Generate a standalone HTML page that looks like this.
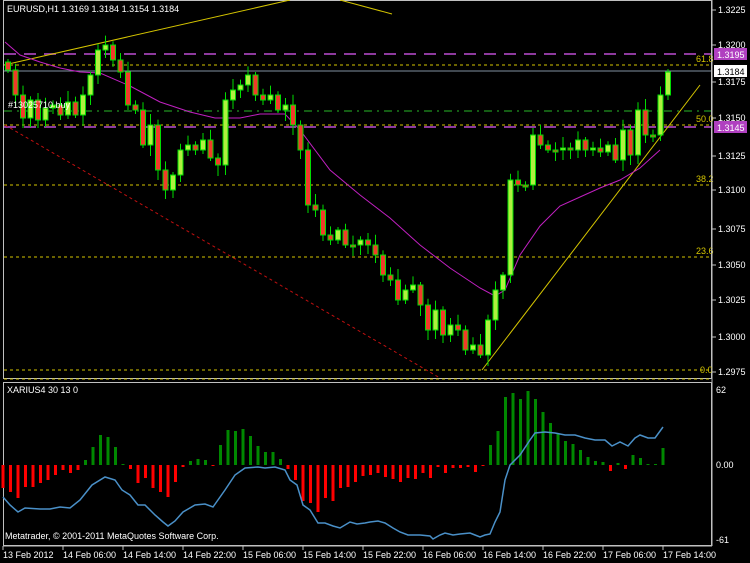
<!DOCTYPE html>
<html><head><meta charset="utf-8"><style>
html,body{margin:0;padding:0;background:#000;}
svg{display:block}
text{font-family:"Liberation Sans",sans-serif;font-size:9px;fill:#fff}
</style></head><body>
<svg id="s" width="750" height="563" viewBox="0 0 750 563" xmlns="http://www.w3.org/2000/svg">
<rect width="750" height="563" fill="#000"/>
<rect x="3.5" y="0.5" width="708" height="378" fill="none" stroke="#c0c0c0"/>
<rect x="3.5" y="382.5" width="708" height="163" fill="none" stroke="#c0c0c0"/>
<line x1="4" y1="54" x2="711" y2="54" stroke="#8e3a9e" stroke-width="2" stroke-dasharray="12,8"/>
<line x1="4" y1="127" x2="711" y2="127" stroke="#8e3a9e" stroke-width="2" stroke-dasharray="12,8"/>
<line x1="4" y1="65" x2="711" y2="65" stroke="#d4c400" stroke-dasharray="3,3"/>
<line x1="4" y1="71" x2="711" y2="71" stroke="#8090a0"/>
<line x1="4" y1="111" x2="711" y2="111" stroke="#1a7a1a" stroke-width="1.5" stroke-dasharray="8,5,2,5"/>
<line x1="4" y1="125" x2="711" y2="125" stroke="#d4c400" stroke-dasharray="3,3"/>
<line x1="4" y1="185" x2="711" y2="185" stroke="#d4c400" stroke-dasharray="3,3"/>
<line x1="4" y1="257" x2="711" y2="257" stroke="#d4c400" stroke-dasharray="3,3"/>
<line x1="4" y1="370" x2="711" y2="370" stroke="#d4c400" stroke-dasharray="3,3"/>
<line x1="4" y1="379" x2="711" y2="379" stroke="#d4c400" stroke-dasharray="3,3"/>
<text x="696" y="62" style="fill:#d4c400">61.8</text>
<text x="696" y="122" style="fill:#d4c400">50.0</text>
<text x="696" y="182" style="fill:#d4c400">38.2</text>
<text x="696" y="254" style="fill:#d4c400">23.6</text>
<text x="700" y="373" style="fill:#d4c400">0.0</text>
<line x1="4" y1="65" x2="290" y2="0" stroke="#d4c400"/>
<line x1="340" y1="0" x2="392" y2="14" stroke="#d4c400"/>
<line x1="482" y1="370" x2="700" y2="85" stroke="#d4c400"/>
<line x1="5" y1="125" x2="440" y2="378" stroke="#c01010" stroke-dasharray="3,3"/>
<polyline fill="none" stroke="#c020c0" points="5,42 20,55 40,62 60,68 80,72 100,73 130,86 160,102 190,112 215,118 240,118 260,114 285,114 300,130 330,170 360,195 390,218 420,245 450,268 480,288 495,296 505,290 520,255 540,226 560,206 580,197 600,188 620,180 640,168 660,150"/>
<g id="candles"></g>
<text x="8" y="108">#13025710 buy</text>
<text x="7" y="12">EURUSD,H1  1.3169 1.3184 1.3154 1.3184</text>
<g id="axis"></g>
<g id="ind"></g>
<polyline fill="none" stroke="#4a90c8" stroke-width="1.5" points="3,497 10,505 18,512 25,508 40,509 50,509 60,507 70,508 80,500 92,485 105,477 115,480 122,490 130,495 138,505 145,505 155,515 163,522 168,526 175,521 183,512 195,505 205,504 213,507 225,490 235,475 245,468 258,467 265,468 275,467 285,470 290,480 297,485 303,505 310,510 318,523 325,523 333,526 340,528 350,522 357,524 365,523 370,522 378,521 385,523 393,528 400,532 408,535 420,535 430,536 433,539 440,535 445,533 453,535 460,534 470,533 475,535 480,537 485,535 490,534 495,522 500,512 505,480 510,465 520,455 530,440 535,433 545,432 555,433 565,435 575,435 585,438 595,440 605,440 612,446 620,442 628,446 635,438 640,435 648,438 655,438 663,427"/>
<text x="7" y="393">XARIUS4 30 13 0</text>
<text x="5" y="539">Metatrader, © 2001-2011 MetaQuotes Software Corp.</text>
<text x="716" y="393">62</text>
<text x="716" y="468">0.00</text>
<text x="716" y="543">-61</text>
<g id="time"></g>
</svg>
<script>
(function(){
var NS="http://www.w3.org/2000/svg";
function el(p,t,a){var e=document.createElementNS(NS,t);for(var k in a)e.setAttribute(k,a[k]);p.appendChild(e);return e;}
var closes=[70,95,118,100,120,108,105,115,102,115,95,75,50,45,60,72,105,110,145,125,170,190,175,150,145,150,140,158,165,100,90,85,75,95,100,95,110,105,125,150,205,210,235,240,230,245,245,240,245,255,275,280,300,290,285,305,330,310,335,325,330,350,345,355,320,290,275,180,185,185,135,145,150,150,148,150,140,150,148,152,145,160,130,155,110,135,135,95,72];
var g=document.getElementById('candles');
var prev=62;
for(var i=0;i<closes.length;i++){
 var x=8+i*7.5,o=prev,c=closes[i];
 var tp=Math.min(o,c),bt=Math.max(o,c);
 var r=((i*37)%11);
 var hi=tp-3-r*0.8,lo=bt+3+((i*53)%9);
 el(g,'line',{x1:x,y1:hi,x2:x,y2:lo,stroke:'#00dd00'});
 var h=Math.max(bt-tp,2);
 el(g,'rect',{x:x-2.5,y:tp,width:5,height:h,fill:(c<o?'#b0f040':'#f03a2a'),stroke:'#00dd00','stroke-width':1});
 prev=c;
}
var ax=document.getElementById('axis');
el(ax,'line',{x1:712,y1:0,x2:712,y2:546,stroke:'#c0c0c0'});
[[10,'1.3225'],[45,'1.3200'],[82,'1.3175'],[118,'1.3150'],[156,'1.3125'],[190,'1.3100'],[229,'1.3075'],[265,'1.3050'],[300,'1.3025'],[337,'1.3000'],[372,'1.2975']].forEach(function(a){
 el(ax,'line',{x1:712,y1:a[0],x2:716,y2:a[0],stroke:'#c0c0c0'});
 var t=el(ax,'text',{x:718,y:a[0]+3});t.textContent=a[1];});
[[54,'1.3195','#b040c0','#fff'],[71,'1.3184','#fff','#000'],[127,'1.3145','#b040c0','#fff']].forEach(function(a){
 el(ax,'rect',{x:714,y:a[0]-6,width:33,height:12,fill:a[2]});
 var t=el(ax,'text',{x:717,y:a[0]+4,style:'fill:'+a[3]});t.textContent=a[1];});
var hist=[-23,-27,-33,-22,-22,-18,-15,-10,-5,-8,-5,5,18,30,28,18,1,-4,-18,-13,-23,-27,-32,-17,-2,4,6,5,-1,20,35,34,36,29,19,13,13,6,-4,-15,-36,-38,-47,-33,-36,-23,-22,-17,-11,-10,-8,-12,-14,-17,-13,-14,-8,-13,-2,-8,-3,-3,-2,-7,-1,20,34,68,72,66,74,66,53,42,31,24,21,15,8,4,3,-6,2,-4,10,7,1,1,17];
var ig=document.getElementById('ind');
for(var i=0;i<hist.length;i++){var x=3+i*7.5,v=hist[i];
 el(ig,'rect',{x:x-1.5,y:v>0?465-v:465,width:3,height:Math.max(Math.abs(v),1),fill:v>0?'#008800':'#ff0000'});}
var tg=document.getElementById('time');
el(tg,'line',{x1:3,y1:546,x2:712,y2:546,stroke:'#c0c0c0'});
['13 Feb 2012','14 Feb 06:00','14 Feb 14:00','14 Feb 22:00','15 Feb 06:00','15 Feb 14:00','15 Feb 22:00','16 Feb 06:00','16 Feb 14:00','16 Feb 22:00','17 Feb 06:00','17 Feb 14:00'].forEach(function(s,i){
 var x=3+i*60;el(tg,'line',{x1:x,y1:546,x2:x,y2:550,stroke:'#c0c0c0'});
 var t=el(tg,'text',{x:x,y:558});t.textContent=s;});
})();
</script>
</body></html>
